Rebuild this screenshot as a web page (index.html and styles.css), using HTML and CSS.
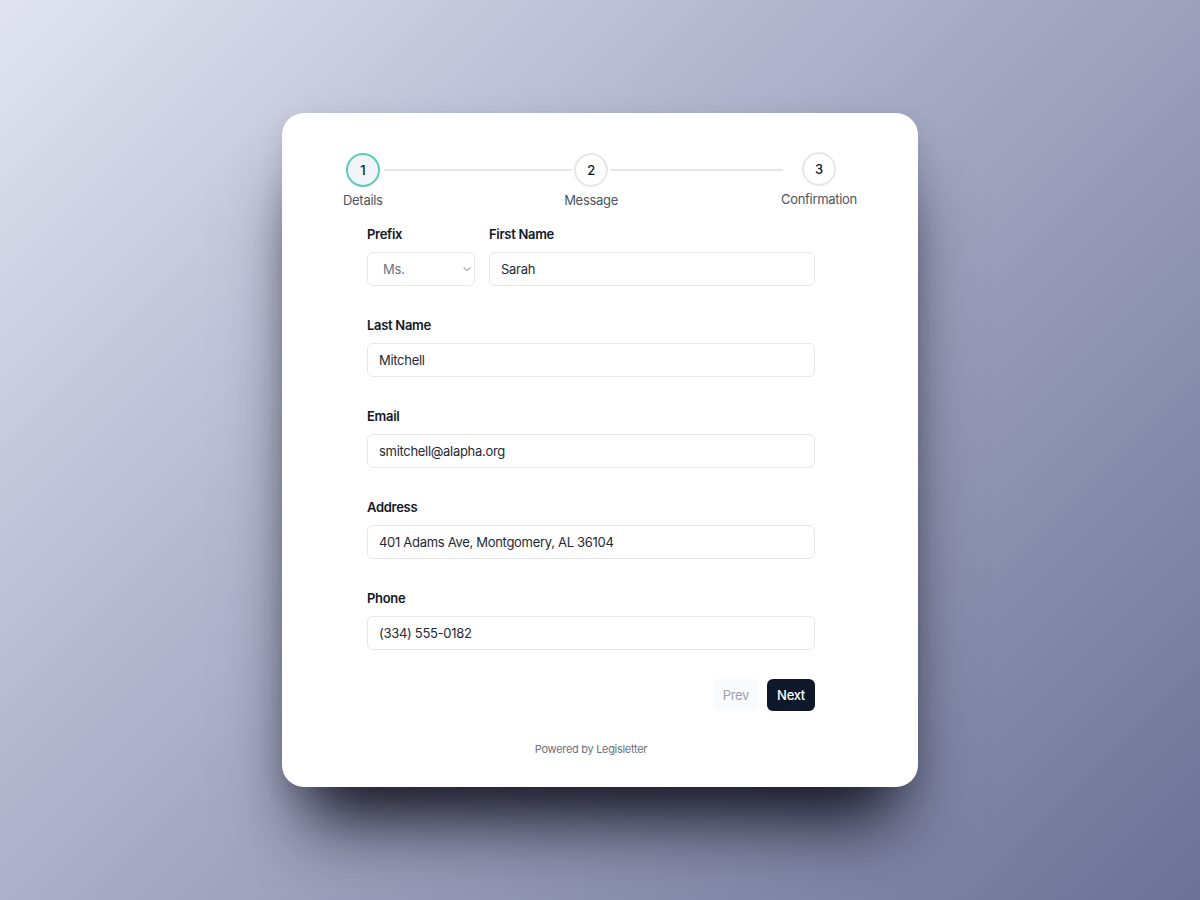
FILE: index.html
```html
<!DOCTYPE html>
<html lang="en">
<head>
<meta charset="utf-8">
<title>Contact form</title>
<link rel="stylesheet" href="styles.css">
</head>
<body>
<main class="stage">
  <section class="card">
    <div class="stepper">
      <div class="step step-active">
        <div class="circle">1</div>
        <div class="step-label">Details</div>
      </div>
      <div class="connector c1"></div>
      <div class="step">
        <div class="circle">2</div>
        <div class="step-label">Message</div>
      </div>
      <div class="connector c2"></div>
      <div class="step step-last">
        <div class="circle">3</div>
        <div class="step-label">Confirmation</div>
      </div>
    </div>

    <form class="form">
      <div class="row">
        <div class="field field-prefix">
          <label class="label">Prefix</label>
          <div class="select">
            <span class="select-value">Ms.</span>
            <svg class="chev" width="10" height="10" viewBox="0 0 10 10"><path d="M2 3.6 L5 6.6 L8 3.6" fill="none" stroke="#6b7280" stroke-width="1" stroke-linecap="round" stroke-linejoin="round"/></svg>
          </div>
        </div>
        <div class="field field-grow">
          <label class="label">First Name</label>
          <div class="input">Sarah</div>
        </div>
      </div>
      <div class="field">
        <label class="label">Last Name</label>
        <div class="input">Mitchell</div>
      </div>
      <div class="field">
        <label class="label">Email</label>
        <div class="input">smitchell@alapha.org</div>
      </div>
      <div class="field">
        <label class="label">Address</label>
        <div class="input">401 Adams Ave, Montgomery, AL 36104</div>
      </div>
      <div class="field">
        <label class="label">Phone</label>
        <div class="input">(334) 555-0182</div>
      </div>
      <div class="actions">
        <button type="button" class="btn btn-prev">Prev</button>
        <button type="button" class="btn btn-next">Next</button>
      </div>
      <p class="footer">Powered by Legisletter</p>
    </form>
  </section>
</main>
</body>
</html>
```

FILE: styles.css
```css
* { box-sizing: border-box; }
html, body { margin: 0; padding: 0; }
body {
  font-family: Inter, "Noto Sans", "Liberation Sans", sans-serif;
  letter-spacing: -0.3px;
  color: #111827;
  background: linear-gradient(135deg, #e1e4f0 0%, #a9adc6 45%, #6c7296 100%);
  width: 1200px;
  height: 900px;
  overflow: hidden;
}
.stage {
  height: 900px;
  display: flex;
  align-items: center;
  justify-content: center;
}
.card {
  width: 636px;
  background: #ffffff;
  border-radius: 22px;
  padding: 40px 61px 30px;
  box-shadow: 0 55px 65px -22px rgba(10, 11, 22, 0.92), 0 8px 24px rgba(30, 34, 60, 0.12);
}
.stepper {
  display: flex;
  align-items: flex-start;
}
.step {
  display: flex;
  flex-direction: column;
  align-items: center;
  flex: none;
}
.step-last { margin-top: -1px; }
.circle {
  width: 34px;
  height: 34px;
  border-radius: 50%;
  border: 2px solid #e5e7eb;
  background: #ffffff;
  display: flex;
  align-items: center;
  justify-content: center;
  font-size: 13px;
  font-weight: 500;
  color: #111827;
}
.step-active .circle {
  border-color: #5fcbb4;
  background: #f1f5f9;
}
.step-label {
  margin-top: 5px;
  font-size: 13px;
  line-height: 16px;
  color: #4b5563;
}
.connector {
  height: 2px;
  background: #e5e7eb;
  margin-top: 16px;
}
.c1 { flex: 182.5; margin-left: 1px; margin-right: -8px; }
.c2 { flex: 167.5; margin-left: -8px; margin-right: -2px; }

.form {
  width: 448px;
  margin: 16px 0 0 24px;
  display: flex;
  flex-direction: column;
}
.row {
  display: flex;
  gap: 14px;
  margin-bottom: 29px;
}
.field {
  display: flex;
  flex-direction: column;
  margin-bottom: 29px;
}
.row .field { margin-bottom: 0; }
.field-prefix { width: 108px; flex: none; }
.field-grow { flex: 1; }
.label {
  font-size: 13px;
  font-weight: 600;
  line-height: 20px;
  color: #111827;
  margin-bottom: 8px;
}
.input, .select {
  height: 34px;
  border: 1px solid #e5e7eb;
  border-radius: 6px;
  padding: 0 11px;
  display: flex;
  align-items: center;
  font-size: 13px;
  color: #1f2937;
  background: #ffffff;
}
.select {
  padding: 0 2px 0 15px;
  justify-content: space-between;
  color: #6b7280;
}
.chev { display: block; }
.actions {
  display: flex;
  justify-content: flex-end;
  gap: 8px;
}
.btn {
  height: 32px;
  border: none;
  border-radius: 6px;
  font-family: inherit;
  letter-spacing: -0.3px;
  font-size: 13px;
  padding: 0 10px;
  cursor: pointer;
}
.btn-prev {
  background: #f8fafc;
  color: #9ca3af;
}
.btn-next {
  background: #0f172a;
  color: #ffffff;
  font-weight: 500;
}
.footer {
  margin: 30px 0 0;
  text-align: center;
  font-size: 11px;
  line-height: 16px;
  color: #6b7280;
}
```
